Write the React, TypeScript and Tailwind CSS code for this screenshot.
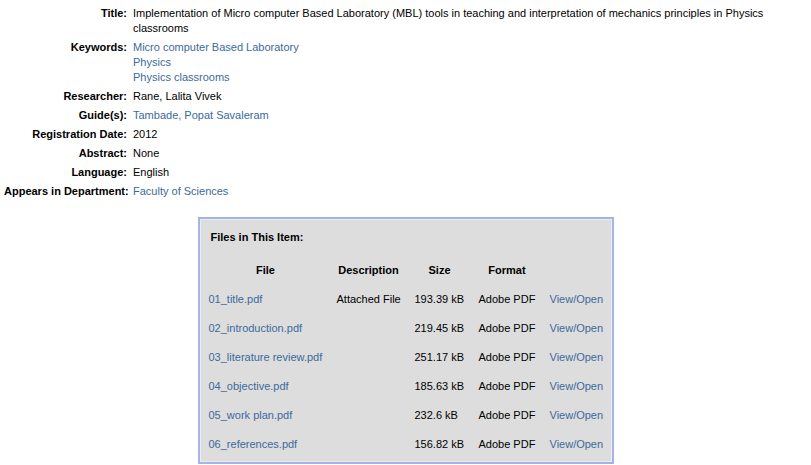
const link = "text-[#3b6a9c]";

type Meta = { label: string; values: string[]; isLink?: boolean };

const metadata: Meta[] = [
  {
    label: "Title:",
    values: [
      "Implementation of Micro computer Based Laboratory (MBL) tools in teaching and interpretation of mechanics principles in Physics classrooms",
    ],
  },
  {
    label: "Keywords:",
    values: ["Micro computer Based Laboratory", "Physics", "Physics classrooms"],
    isLink: true,
  },
  { label: "Researcher:", values: ["Rane, Lalita Vivek"] },
  { label: "Guide(s):", values: ["Tambade, Popat Savaleram"], isLink: true },
  { label: "Registration Date:", values: ["2012"] },
  { label: "Abstract:", values: ["None"] },
  { label: "Language:", values: ["English"] },
  { label: "Appears in Department:", values: ["Faculty of Sciences"], isLink: true },
];

const files = [
  { name: "01_title.pdf", desc: "Attached File", size: "193.39 kB" },
  { name: "02_introduction.pdf", desc: "", size: "219.45 kB" },
  { name: "03_literature review.pdf", desc: "", size: "251.17 kB" },
  { name: "04_objective.pdf", desc: "", size: "185.63 kB" },
  { name: "05_work plan.pdf", desc: "", size: "232.6 kB" },
  { name: "06_references.pdf", desc: "", size: "156.82 kB" },
];

export default function App() {
  return (
    <div className="min-h-screen bg-white text-[11px] leading-[15px] text-black font-['Liberation_Sans',Arial,sans-serif] overflow-hidden">
      <div className="pt-[4px] pl-[4px] pr-[6px] grid grid-cols-[123px_1fr] gap-x-[6px]">
        {metadata.map((m) => (
          <div key={m.label} className="contents">
            <div className="py-[2px] text-right font-bold whitespace-nowrap">{m.label}</div>
            <div className="py-[2px]">
              {m.values.map((v) => (
                <div key={v} className={m.isLink ? link : ""}>
                  {v}
                </div>
              ))}
            </div>
          </div>
        ))}
      </div>

      <div className="mt-[16px] mx-auto w-[416px] border-2 border-[#a7b3e3] bg-[#dddddd] shadow-[inset_0_0_0_1px_#ebebf0]">
        <div className="pt-[11px] pl-[11px] font-bold">Files in This Item:</div>
        <div className="mt-[11px] pl-[9px] pr-[8px] pb-[3px]">
          <div className="grid grid-cols-[114px_64px_50px_57px_54px] gap-x-[14px] h-[29px] items-center font-bold text-center">
            <div>File</div>
            <div>Description</div>
            <div>Size</div>
            <div>Format</div>
            <div></div>
          </div>
          {files.map((f) => (
            <div
              key={f.name}
              className="grid grid-cols-[114px_64px_50px_57px_54px] gap-x-[14px] h-[29px] items-center whitespace-nowrap"
            >
              <div className={link}>{f.name}</div>
              <div>{f.desc}</div>
              <div>{f.size}</div>
              <div>Adobe PDF</div>
              <div className={link}>View/Open</div>
            </div>
          ))}
        </div>
      </div>
    </div>
  );
}
